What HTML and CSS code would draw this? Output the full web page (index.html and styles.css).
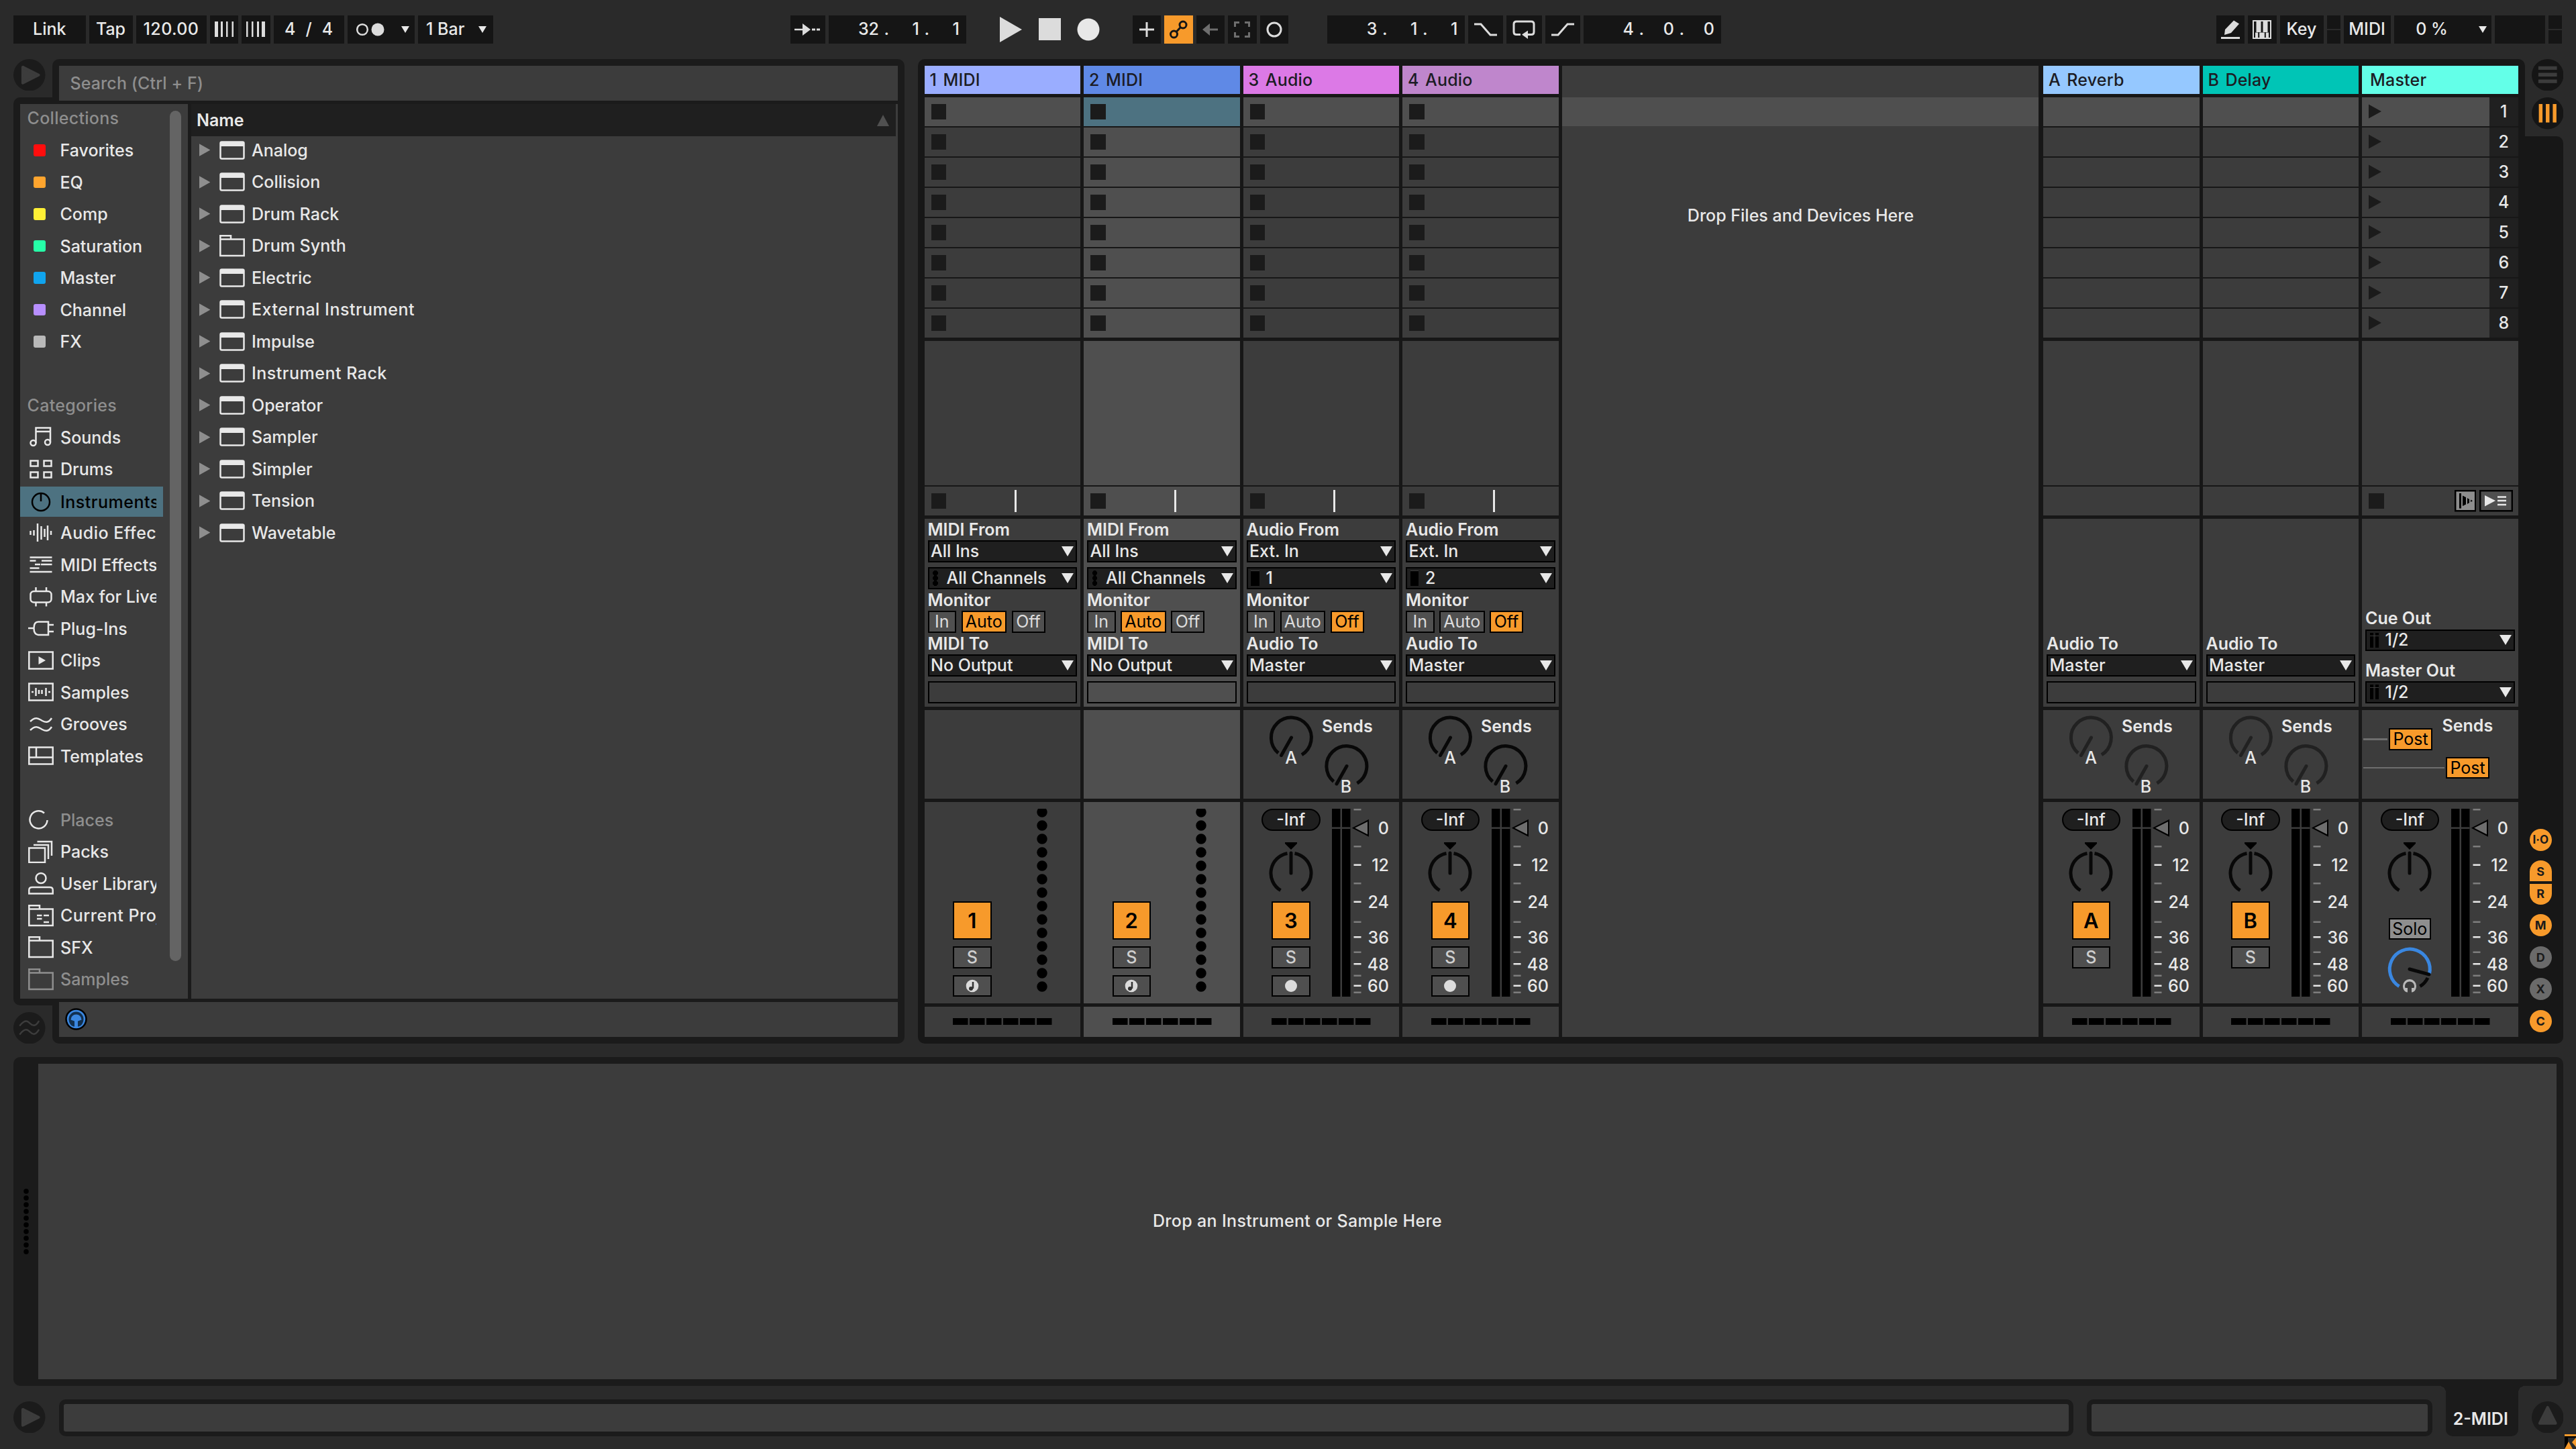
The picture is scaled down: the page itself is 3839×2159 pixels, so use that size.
FILE: index.html
```
<!DOCTYPE html>
<html lang="en">
<head>
    <meta charset="UTF-8">
    <title>Live Set</title>
    <link rel="stylesheet" href="styles.css">
</head>
<body>
<!-- shared icons -->
<svg class="defs" width="0" height="0">
    <symbol id="tri-right" viewBox="0 0 17 19"><path d="M0 0L17 9.5L0 19Z" fill="currentColor"/></symbol>
    <symbol id="tri-down" viewBox="0 0 18 15"><path d="M0 0H18L9 15Z" fill="currentColor"/></symbol>
    <symbol id="device" viewBox="0 0 38 34"><rect x="1.5" y="4.5" width="35" height="25" rx="2" fill="none" stroke="currentColor" stroke-width="2.5"/><path d="M1 4h36v7H1z" fill="currentColor"/></symbol>
    <symbol id="folder" viewBox="0 0 38 34"><path d="M1.3 32V2.3H17V7.5H36.7V32ZM1.3 7.5H17" fill="none" stroke="currentColor" stroke-width="2.5"/></symbol>
    <symbol id="k-send" viewBox="-35 -35 70 70"><g fill="none" stroke="currentColor" stroke-width="5"><path d="M-19.5 23A30 30 0 1 1 15.5 25.7"/><path d="M0 0L-15 26.5" stroke-linecap="round"/></g></symbol>
    <symbol id="k-pan" viewBox="-35 -46 70 75"><path d="M-9 -46H9V-44L0 -35L-9 -44Z"/><g fill="none" stroke="#080808" stroke-width="5"><path d="M-15.5 25.7A30 30 0 0 1 -5.5 -29.5M5.5 -29.5A30 30 0 0 1 15.5 25.7"/><path d="M0 0V-30" stroke-linecap="round"/></g></symbol>
    <symbol id="meter" viewBox="0 0 90 280">
        <path d="M0 0H12.5V280H0ZM15 0H27.5V280H15Z"/>
        <path d="M0 28.7H27.5" stroke="#3c3c3c" stroke-width="2.5"/>
        <path d="M32.5 1.3h11M32.5 56.3h11M32.5 111.3h11M32.5 168.7h11M32.5 213.7h11M32.5 248.7h11M32.5 273.7h11" stroke="#7d7d7d" stroke-width="2.5"/>
        <path d="M32.5 83.7h11M32.5 138.7h11M32.5 191.3h11M32.5 231.3h11M32.5 263.7h11" stroke="#e8e8e8" stroke-width="2.5"/>
        <path d="M32 28.7L54 17.5V40Z" fill="#6e6e6e" stroke="#000" stroke-width="2"/>
    </symbol>
    <symbol id="leds" viewBox="0 0 16 280"><path d="M8 5V266" stroke="#000" stroke-width="15.5" stroke-linecap="round" stroke-dasharray="0 20"/></symbol>
    <symbol id="xfade" viewBox="0 0 148 10"><path d="M0 5H148" stroke="#000" stroke-width="10" stroke-dasharray="22.5 2.5"/></symbol>
    <symbol id="waves" viewBox="0 0 38 34"><path d="M3 13C12 4 17 10 21 12S30 16 35 8M3 26C12 17 17 23 21 25S30 29 35 21" fill="none" stroke="currentColor" stroke-width="2.5"/></symbol>
    <symbol id="midi-arm" viewBox="-10 -10 20 20"><circle r="9.3" fill="#dcdcdc"/><path d="M1 -6V4" stroke="#333" stroke-width="2.5"/><circle cx="-2" cy="4" r="3" fill="#333"/></symbol>
    <symbol id="phones" viewBox="-12 -12 24 24"><path d="M-3 9.5C-8 9.5 -10 4 -10 0A10 10 0 0 1 10 0C10 4 8 9.5 3 9.5V3L6.5 3A7 7 0 1 0 -6.5 3L-3 3Z" fill="currentColor"/></symbol>
</svg>

<div class="app">
    <!-- control bar -->
    <div class="topbar">
        <div class="box w-link">Link</div>
        <div class="box w-tap">Tap</div>
        <div class="box w-tempo">120.00</div>
        <div class="box w-nudge"><svg width="28" height="23"><path d="M0 0h5v23H0zM9 0h3v23H9zM17 0h2.5v23H17zM25.5 0H28v23h-2.5z" fill="#dcdcdc"/></svg></div>
        <div class="box w-nudge"><svg width="28" height="23"><path d="M23 0h5v23h-5zM16 0h3v23h-3zM8 0h2.5v23H8zM0 0h2.5v23H0z" fill="#dcdcdc"/></svg></div>
        <div class="box w-sig"><span>4</span><span>/</span><span>4</span></div>
        <div class="box w-metro"><svg width="42" height="20"><circle cx="9" cy="10" r="7.8" fill="none" stroke="#dcdcdc" stroke-width="2.5"/><circle cx="32" cy="10" r="9.5" fill="#dcdcdc"/></svg><svg class="mini-arrow"><use href="#tri-down"/></svg></div>
        <div class="box w-bar">1 Bar<svg class="mini-arrow"><use href="#tri-down"/></svg></div>

        <div class="box w-follow"><svg width="40" height="20"><path d="M0 8.7h12V1l12 9l-12 9v-7.7H0z" fill="#dcdcdc"/><path d="M26 10h5M33 10h5" stroke="#dcdcdc" stroke-width="3"/></svg></div>
        <div class="box w-pos"><span>32</span><i>.</i><span>1</span><i>.</i><span>1</span></div>
        <div class="transport">
            <svg width="33" height="38"><path d="M0 0L33 19L0 38Z" fill="#dcdcdc"/></svg>
            <svg width="33" height="33"><path d="M0 0H33V33H0Z" fill="#dcdcdc"/></svg>
            <svg width="34" height="34"><circle cx="17" cy="17" r="16.5" fill="#e8e8e8"/></svg>
        </div>
        <div class="box w-sq"><svg width="24" height="24"><path d="M12 1V23M1 12H23" stroke="#dcdcdc" stroke-width="3"/></svg></div>
        <div class="box w-sq on"><svg width="28" height="28"><g fill="none" stroke="#151515" stroke-width="3"><circle cx="7.5" cy="21" r="5"/><circle cx="21" cy="7" r="5"/><path d="M11 17.5L17.5 10.5"/></g></svg></div>
        <div class="box w-sq"><svg width="24" height="20"><path d="M0 10L11 1V8.5H23V11.5H11V19Z" fill="#6e6e6e"/></svg></div>
        <div class="box w-sq"><svg width="24" height="24"><path d="M1.5 8V1.5H8M16 1.5H22.5V8M22.5 16V22.5H16M8 22.5H1.5V16" fill="none" stroke="#6e6e6e" stroke-width="3"/></svg></div>
        <div class="box w-sq"><svg width="24" height="24"><circle cx="12" cy="12" r="10" fill="none" stroke="#dcdcdc" stroke-width="3"/></svg></div>

        <div class="box w-pos loop-start"><span>3</span><i>.</i><span>1</span><i>.</i><span>1</span></div>
        <div class="box w-punch"><svg width="34" height="20"><path d="M0 2H10L24 18H34" fill="none" stroke="#dcdcdc" stroke-width="3"/></svg></div>
        <div class="box w-punch"><svg width="34" height="28"><path d="M12 21.5H6Q2 21.5 2 17.5V6Q2 2 6 2H28Q32 2 32 6V17.5Q32 21.5 28 21.5H22" fill="none" stroke="#dcdcdc" stroke-width="3"/><path d="M14 21.5L23 15.5V28Z" fill="#dcdcdc"/></svg></div>
        <div class="box w-punch"><svg width="34" height="20"><path d="M0 18H10L24 2H34" fill="none" stroke="#dcdcdc" stroke-width="3"/></svg></div>
        <div class="box w-pos"><span>4</span><i>.</i><span>0</span><i>.</i><span>0</span></div>

        <div class="box w-sq draw"><svg width="28" height="28"><path d="M5 22L6 14L19 0.5L27 5.5L15 19Z" fill="#dcdcdc"/><path d="M0 26.5H28" stroke="#dcdcdc" stroke-width="3"/></svg></div>
        <div class="box w-sq"><svg width="28" height="28"><path d="M1 1H27V27H1Z" fill="none" stroke="#dcdcdc" stroke-width="2"/><path d="M5.5 0H12.5V18H5.5ZM15.5 0H22.5V18H15.5Z" fill="#dcdcdc"/><path d="M2 2H4V26H2ZM13 2H15V18H13ZM24 2H26V26H24Z" fill="#151515"/><path d="M4 18.5H8.2V26H4ZM10.2 18.5H17.8V26H10.2ZM19.8 18.5H24V26H19.8Z" fill="#dcdcdc"/></svg></div>
        <div class="box w-key">Key</div>
        <div class="leds"><i></i><i></i></div>
        <div class="box w-midi">MIDI</div>
        <div class="box w-cpu"><span>0 %</span><svg class="mini-arrow"><use href="#tri-down"/></svg></div>
        <div class="box w-disk"></div>
        <div class="leds"><i></i><i></i></div>
    </div>

    <div class="middle">
        <!-- browser -->
        <div class="browser">
            <div class="browser-top">
                <svg class="round" viewBox="0 0 48 48"><circle cx="24" cy="24" r="24" fill="#1b1b1b"/><path d="M14 12L38 24L14 36Z" fill="#3c3c3c" stroke="#3c3c3c" stroke-width="4" stroke-linejoin="round"/></svg>
                <div class="search-wrap"><div class="search">Search (Ctrl + F)</div></div>
            </div>
            <div class="browser-body">
                <div class="sidebar">
                    <div class="rows">
                        <div class="row title">Collections</div>
                        <div class="row"><b class="tag red"></b><span>Favorites</span></div>
                        <div class="row"><b class="tag orange"></b><span>EQ</span></div>
                        <div class="row"><b class="tag yellow"></b><span>Comp</span></div>
                        <div class="row"><b class="tag green"></b><span>Saturation</span></div>
                        <div class="row"><b class="tag blue"></b><span>Master</span></div>
                        <div class="row"><b class="tag purple"></b><span>Channel</span></div>
                        <div class="row"><b class="tag grey"></b><span>FX</span></div>
                        <div class="row"></div>
                        <div class="row title">Categories</div>
                        <div class="row"><svg class="ico" viewBox="0 0 38 34"><path d="M11.5 26V3.5H33V25M11.5 9H33"/><circle cx="7.5" cy="26" r="4"/><circle cx="29" cy="25" r="4"/></svg><span>Sounds</span></div>
                        <div class="row"><svg class="ico" viewBox="0 0 38 34"><path d="M3.5 4.5h11v8h-11zM23.5 4.5h11v8h-11zM3.5 21.5h11v8h-11zM23.5 21.5h11v8h-11z"/></svg><span>Drums</span></div>
                        <div class="row active"><svg class="ico" viewBox="0 0 38 34"><circle cx="19" cy="17" r="13"/><path d="M19 4V16"/></svg><span class="wide">Instruments</span></div>
                        <div class="row"><svg class="ico" viewBox="0 0 38 34"><path d="M3.5 14v6M8.5 13v8M14 3v27M19.5 7v20M24.5 11v12M29 6v22M34 14v6"/></svg><span class="wide">Audio Effects</span></div>
                        <div class="row"><svg class="ico" viewBox="0 0 38 34"><path d="M2.5 6.5h33M2.5 11.5h9M20 11.5h15.5M10 17h8M19 17h16.5M2.5 22.5h14M2.5 28h33"/></svg><span>MIDI Effects</span></div>
                        <div class="row"><svg class="ico" viewBox="0 0 38 34"><rect x="3.5" y="9" width="31" height="16.5" rx="5"/><path d="M11.5 3v6M27 3v6M11.5 25.5v6M27 25.5v6"/></svg><span>Max for Live</span></div>
                        <div class="row"><svg class="ico" viewBox="0 0 38 34"><path d="M0 17H8M30 7.5H15Q8.5 7.5 8.5 17T15 27H30ZM30 12H38M30 22H38"/></svg><span>Plug-Ins</span></div>
                        <div class="row"><svg class="ico" viewBox="0 0 38 34"><path d="M1.3 4.5h35.4v25H1.3z"/><path d="M15.5 11L26 17L15.5 23Z" fill="#e8e8e8" stroke="none"/></svg><span>Clips</span></div>
                        <div class="row"><svg class="ico" viewBox="0 0 38 34"><path d="M1.3 4.5h35.4v25H1.3zM5 17h3M11.5 11v12M16 14v6M20.5 14v6M26.5 11v12M30 17h3"/></svg><span>Samples</span></div>
                        <div class="row"><svg class="ico"><use href="#waves"/></svg><span>Grooves</span></div>
                        <div class="row"><svg class="ico" viewBox="0 0 38 34"><path d="M1.3 4.5h35.4v25H1.3zM1.3 19.5h35.4M12 4.5v15"/></svg><span>Templates</span></div>
                        <div class="row"></div>
                        <div class="row dim"><svg class="ico lit" viewBox="0 0 38 34"><path d="M24 7.5A13 13 0 1 0 28.5 18"/></svg><span>Places</span></div>
                        <div class="row"><svg class="ico" viewBox="0 0 38 34"><path d="M1.3 11.5H25V33H1.3zM8 7H30V28M13.5 2H35V23"/></svg><span>Packs</span></div>
                        <div class="row"><svg class="ico" viewBox="0 0 38 34"><circle cx="19" cy="9.5" r="7.5"/><path d="M1.3 32.5V27Q1.3 23 6 23H32Q36.7 23 36.7 27V32.5Z"/></svg><span>User Library</span></div>
                        <div class="row"><svg class="ico" viewBox="0 0 38 34"><path d="M1.3 32V2.3H17V7.5H36.7V32ZM1.3 7.5H17M13 17h7.5M13 22h7.5M23 17h8M23 27h8"/></svg><span class="wide">Current Project</span></div>
                        <div class="row"><svg class="ico"><use href="#folder"/></svg><span>SFX</span></div>
                        <div class="row dim"><svg class="ico"><use href="#folder"/></svg><span>Samples</span></div>
                    </div>
                    <div class="scrollbar"></div>
                </div>
                <div class="content">
                    <div class="content-head">Name<svg width="18" height="17"><path d="M9 0L18 17H0Z" fill="#505050"/></svg></div>
                    <div class="list">
                        <div class="item"><svg class="fold"><use href="#tri-right"/></svg><svg class="ico"><use href="#device"/></svg><span>Analog</span></div>
                        <div class="item"><svg class="fold"><use href="#tri-right"/></svg><svg class="ico"><use href="#device"/></svg><span>Collision</span></div>
                        <div class="item"><svg class="fold"><use href="#tri-right"/></svg><svg class="ico"><use href="#device"/></svg><span>Drum Rack</span></div>
                        <div class="item"><svg class="fold"><use href="#tri-right"/></svg><svg class="ico"><use href="#folder"/></svg><span>Drum Synth</span></div>
                        <div class="item"><svg class="fold"><use href="#tri-right"/></svg><svg class="ico"><use href="#device"/></svg><span>Electric</span></div>
                        <div class="item"><svg class="fold"><use href="#tri-right"/></svg><svg class="ico"><use href="#device"/></svg><span class="wide">External Instrument</span></div>
                        <div class="item"><svg class="fold"><use href="#tri-right"/></svg><svg class="ico"><use href="#device"/></svg><span>Impulse</span></div>
                        <div class="item"><svg class="fold"><use href="#tri-right"/></svg><svg class="ico"><use href="#device"/></svg><span class="wide">Instrument Rack</span></div>
                        <div class="item"><svg class="fold"><use href="#tri-right"/></svg><svg class="ico"><use href="#device"/></svg><span>Operator</span></div>
                        <div class="item"><svg class="fold"><use href="#tri-right"/></svg><svg class="ico"><use href="#device"/></svg><span>Sampler</span></div>
                        <div class="item"><svg class="fold"><use href="#tri-right"/></svg><svg class="ico"><use href="#device"/></svg><span>Simpler</span></div>
                        <div class="item"><svg class="fold"><use href="#tri-right"/></svg><svg class="ico"><use href="#device"/></svg><span>Tension</span></div>
                        <div class="item"><svg class="fold"><use href="#tri-right"/></svg><svg class="ico"><use href="#device"/></svg><span>Wavetable</span></div>
                    </div>
                </div>
            </div>
            <div class="browser-bottom">
                <svg class="round" viewBox="0 0 48 48"><circle cx="24" cy="24" r="24" fill="#1b1b1b"/><path d="M10 20C18 10 22 14 25 17S33 23 38 14M10 33C18 23 22 27 25 30S33 36 38 27" fill="none" stroke="#3c3c3c" stroke-width="2.5" stroke-linecap="round"/></svg>
                <div class="preview-wrap"><div class="preview"><svg width="33" height="33" viewBox="-16.5 -16.5 33 33"><circle r="15" fill="#3a87e0" stroke="#000" stroke-width="2.5"/><path d="M-2.5 11C-8 11 -11 5 -11 0A11 11 0 0 1 11 0C11 5 8 11 2.5 11V3L8 1A8 8 0 1 0 -8 1L-2.5 3Z" fill="#12304f"/></svg></div></div>
            </div>
        </div>

        <!-- session view -->
        <div class="session">
            <div class="tracks">
                <div class="track">
                    <div class="name c1">1 MIDI</div>
                    <div class="slots"><div class="slot scene"><b></b></div><div class="slot"><b></b></div><div class="slot"><b></b></div><div class="slot"><b></b></div><div class="slot"><b></b></div><div class="slot"><b></b></div><div class="slot"><b></b></div><div class="slot"><b></b></div></div>
                    <div class="lower"><div class="blank"></div><div class="status"><b></b><i></i></div></div>
                    <div class="io">
                        <label>MIDI From</label>
                        <div class="select">All Ins<svg><use href="#tri-down"/></svg></div>
                        <div class="select second"><em class="dots"></em>All Channels<svg><use href="#tri-down"/></svg></div>
                        <label>Monitor</label>
                        <div class="monitor"><span>In</span><span class="on">Auto</span><span>Off</span></div>
                        <label>MIDI To</label>
                        <div class="select">No Output<svg><use href="#tri-down"/></svg></div>
                        <div class="empty"></div>
                    </div>
                    <div class="sends"></div>
                    <div class="mixer">
                        <div class="ctl midi"><div class="activator">1</div><div class="solo">S</div><div class="solo"><svg width="20" height="20"><use href="#midi-arm"/></svg></div></div>
                        <svg class="led-col"><use href="#leds"/></svg>
                    </div>
                    <div class="cross"><svg width="148" height="10"><use href="#xfade"/></svg></div>
                </div>

                <div class="track selected">
                    <div class="name c2">2 MIDI</div>
                    <div class="slots"><div class="slot picked"><b></b></div><div class="slot"><b></b></div><div class="slot"><b></b></div><div class="slot"><b></b></div><div class="slot"><b></b></div><div class="slot"><b></b></div><div class="slot"><b></b></div><div class="slot"><b></b></div></div>
                    <div class="lower"><div class="blank"></div><div class="status"><b></b><i></i></div></div>
                    <div class="io">
                        <label>MIDI From</label>
                        <div class="select">All Ins<svg><use href="#tri-down"/></svg></div>
                        <div class="select second"><em class="dots"></em>All Channels<svg><use href="#tri-down"/></svg></div>
                        <label>Monitor</label>
                        <div class="monitor"><span>In</span><span class="on">Auto</span><span>Off</span></div>
                        <label>MIDI To</label>
                        <div class="select">No Output<svg><use href="#tri-down"/></svg></div>
                        <div class="empty"></div>
                    </div>
                    <div class="sends"></div>
                    <div class="mixer">
                        <div class="ctl midi"><div class="activator">2</div><div class="solo">S</div><div class="solo"><svg width="20" height="20"><use href="#midi-arm"/></svg></div></div>
                        <svg class="led-col"><use href="#leds"/></svg>
                    </div>
                    <div class="cross"><svg width="148" height="10"><use href="#xfade"/></svg></div>
                </div>

                <div class="track">
                    <div class="name c3">3 Audio</div>
                    <div class="slots"><div class="slot scene"><b></b></div><div class="slot"><b></b></div><div class="slot"><b></b></div><div class="slot"><b></b></div><div class="slot"><b></b></div><div class="slot"><b></b></div><div class="slot"><b></b></div><div class="slot"><b></b></div></div>
                    <div class="lower"><div class="blank"></div><div class="status"><b></b><i></i></div></div>
                    <div class="io">
                        <label>Audio From</label>
                        <div class="select">Ext. In<svg><use href="#tri-down"/></svg></div>
                        <div class="select second"><em class="mono"></em>1<svg><use href="#tri-down"/></svg></div>
                        <label>Monitor</label>
                        <div class="monitor"><span>In</span><span>Auto</span><span class="on">Off</span></div>
                        <label>Audio To</label>
                        <div class="select">Master<svg><use href="#tri-down"/></svg></div>
                        <div class="empty"></div>
                    </div>
                    <svg class="sends" viewBox="0 0 232.5 132.5"><use href="#k-send" x="36.5" y="6" width="70" height="70"/><use href="#k-send" x="119" y="48.5" width="70" height="70"/><text x="71" y="80" class="mid">A</text><text x="153" y="122.5" class="mid">B</text><text x="117" y="32.5" class="bold">Sends</text></svg>
                    <div class="mixer">
                        <div class="ctl"><div class="vol">-Inf</div><svg class="pan"><use href="#k-pan"/></svg><div class="activator">3</div><div class="solo">S</div><div class="solo"><b class="arm"></b></div></div>
                        <svg class="meter" viewBox="0 0 90 280"><use href="#meter"/><text x="85" y="38">0</text><text x="85" y="93">12</text><text x="85" y="148">24</text><text x="85" y="200.5">36</text><text x="85" y="240.5">48</text><text x="85" y="273">60</text></svg>
                    </div>
                    <div class="cross"><svg width="148" height="10"><use href="#xfade"/></svg></div>
                </div>

                <div class="track">
                    <div class="name c4">4 Audio</div>
                    <div class="slots"><div class="slot scene"><b></b></div><div class="slot"><b></b></div><div class="slot"><b></b></div><div class="slot"><b></b></div><div class="slot"><b></b></div><div class="slot"><b></b></div><div class="slot"><b></b></div><div class="slot"><b></b></div></div>
                    <div class="lower"><div class="blank"></div><div class="status"><b></b><i></i></div></div>
                    <div class="io">
                        <label>Audio From</label>
                        <div class="select">Ext. In<svg><use href="#tri-down"/></svg></div>
                        <div class="select second"><em class="mono"></em>2<svg><use href="#tri-down"/></svg></div>
                        <label>Monitor</label>
                        <div class="monitor"><span>In</span><span>Auto</span><span class="on">Off</span></div>
                        <label>Audio To</label>
                        <div class="select">Master<svg><use href="#tri-down"/></svg></div>
                        <div class="empty"></div>
                    </div>
                    <svg class="sends" viewBox="0 0 232.5 132.5"><use href="#k-send" x="36.5" y="6" width="70" height="70"/><use href="#k-send" x="119" y="48.5" width="70" height="70"/><text x="71" y="80" class="mid">A</text><text x="153" y="122.5" class="mid">B</text><text x="117" y="32.5" class="bold">Sends</text></svg>
                    <div class="mixer">
                        <div class="ctl"><div class="vol">-Inf</div><svg class="pan"><use href="#k-pan"/></svg><div class="activator">4</div><div class="solo">S</div><div class="solo"><b class="arm"></b></div></div>
                        <svg class="meter" viewBox="0 0 90 280"><use href="#meter"/><text x="85" y="38">0</text><text x="85" y="93">12</text><text x="85" y="148">24</text><text x="85" y="200.5">36</text><text x="85" y="240.5">48</text><text x="85" y="273">60</text></svg>
                    </div>
                    <div class="cross"><svg width="148" height="10"><use href="#xfade"/></svg></div>
                </div>

                <div class="drop-area"><div class="drop-scene"></div><p>Drop Files and Devices Here</p></div>

                <div class="track return">
                    <div class="name c5">A Reverb</div>
                    <div class="slots"><div class="slot scene"></div><div class="slot"></div><div class="slot"></div><div class="slot"></div><div class="slot"></div><div class="slot"></div><div class="slot"></div><div class="slot"></div></div>
                    <div class="lower"><div class="blank"></div><div class="status"></div></div>
                    <div class="io">
                        <label>Audio To</label>
                        <div class="select">Master<svg><use href="#tri-down"/></svg></div>
                        <div class="empty"></div>
                    </div>
                    <svg class="sends" viewBox="0 0 232.5 132.5"><use href="#k-send" x="36.5" y="6" width="70" height="70"/><use href="#k-send" x="119" y="48.5" width="70" height="70"/><text x="71" y="80" class="mid">A</text><text x="153" y="122.5" class="mid">B</text><text x="117" y="32.5" class="bold">Sends</text></svg>
                    <div class="mixer">
                        <div class="ctl"><div class="vol">-Inf</div><svg class="pan"><use href="#k-pan"/></svg><div class="activator">A</div><div class="solo">S</div></div>
                        <svg class="meter" viewBox="0 0 90 280"><use href="#meter"/><text x="85" y="38">0</text><text x="85" y="93">12</text><text x="85" y="148">24</text><text x="85" y="200.5">36</text><text x="85" y="240.5">48</text><text x="85" y="273">60</text></svg>
                    </div>
                    <div class="cross"><svg width="148" height="10"><use href="#xfade"/></svg></div>
                </div>

                <div class="track return">
                    <div class="name c6">B Delay</div>
                    <div class="slots"><div class="slot scene"></div><div class="slot"></div><div class="slot"></div><div class="slot"></div><div class="slot"></div><div class="slot"></div><div class="slot"></div><div class="slot"></div></div>
                    <div class="lower"><div class="blank"></div><div class="status"></div></div>
                    <div class="io">
                        <label>Audio To</label>
                        <div class="select">Master<svg><use href="#tri-down"/></svg></div>
                        <div class="empty"></div>
                    </div>
                    <svg class="sends" viewBox="0 0 232.5 132.5"><use href="#k-send" x="36.5" y="6" width="70" height="70"/><use href="#k-send" x="119" y="48.5" width="70" height="70"/><text x="71" y="80" class="mid">A</text><text x="153" y="122.5" class="mid">B</text><text x="117" y="32.5" class="bold">Sends</text></svg>
                    <div class="mixer">
                        <div class="ctl"><div class="vol">-Inf</div><svg class="pan"><use href="#k-pan"/></svg><div class="activator">B</div><div class="solo">S</div></div>
                        <svg class="meter" viewBox="0 0 90 280"><use href="#meter"/><text x="85" y="38">0</text><text x="85" y="93">12</text><text x="85" y="148">24</text><text x="85" y="200.5">36</text><text x="85" y="240.5">48</text><text x="85" y="273">60</text></svg>
                    </div>
                    <div class="cross"><svg width="148" height="10"><use href="#xfade"/></svg></div>
                </div>

                <div class="track master">
                    <div class="name c7">Master</div>
                    <div class="slots">
                        <div class="slot scene"><svg><use href="#tri-right"/></svg><u>1</u></div>
                        <div class="slot"><svg><use href="#tri-right"/></svg><u>2</u></div>
                        <div class="slot"><svg><use href="#tri-right"/></svg><u>3</u></div>
                        <div class="slot"><svg><use href="#tri-right"/></svg><u>4</u></div>
                        <div class="slot"><svg><use href="#tri-right"/></svg><u>5</u></div>
                        <div class="slot"><svg><use href="#tri-right"/></svg><u>6</u></div>
                        <div class="slot"><svg><use href="#tri-right"/></svg><u>7</u></div>
                        <div class="slot"><svg><use href="#tri-right"/></svg><u>8</u></div>
                    </div>
                    <div class="lower"><div class="blank"></div><div class="status"><b></b>
                        <svg class="btn-a" viewBox="0 0 32.5 32.5"><rect x="1.2" y="1.2" width="30" height="30" fill="#8e8e8e" stroke="#000" stroke-width="2.5"/><path d="M7 5h3v22.5H7zM12 8.5L17 11V21.5L12 24zM19 12l3 2v5l-3 2zM24 14.5l3 1.7L24 18z"/></svg>
                        <svg class="btn-b" viewBox="0 0 50 32.5"><rect x="1.2" y="1.2" width="47.6" height="30" fill="#505050" stroke="#000" stroke-width="2.5"/><path d="M8 8L24 16L8 24.5Z" fill="#e8e8e8"/><path d="M27 10.5H40M27 16H40M27 22H40" stroke="#e8e8e8" stroke-width="2.5"/></svg>
                    </div></div>
                    <div class="io">
                        <label>Cue Out</label>
                        <div class="select cue"><em class="stereo"></em>1/2<svg><use href="#tri-down"/></svg></div>
                        <label>Master Out</label>
                        <div class="select"><em class="stereo"></em>1/2<svg><use href="#tri-down"/></svg></div>
                    </div>
                    <div class="sends post">
                        <h6>Sends</h6>
                        <div><hr class="short"><span>Post</span></div>
                        <div><hr class="long"><span>Post</span></div>
                    </div>
                    <div class="mixer">
                        <div class="ctl"><div class="vol">-Inf</div><svg class="pan"><use href="#k-pan"/></svg><div class="cue-solo">Solo</div>
                            <svg class="cue-knob" viewBox="-35 -35 70 75"><path d="M-15.5 25.7A30 30 0 1 1 29.5 7" fill="none" stroke="#3a87e0" stroke-width="5"/><path d="M27 13A30 30 0 0 1 15.5 25.7" fill="none" stroke="#080808" stroke-width="5"/><path d="M0 0L29 7.8" stroke="#080808" stroke-width="5" stroke-linecap="round"/><use href="#phones" x="-12" y="13" width="24" height="24"/></svg>
                        </div>
                        <svg class="meter" viewBox="0 0 90 280"><use href="#meter"/><text x="85" y="38">0</text><text x="85" y="93">12</text><text x="85" y="148">24</text><text x="85" y="200.5">36</text><text x="85" y="240.5">48</text><text x="85" y="273">60</text></svg>
                    </div>
                    <div class="cross"><svg width="148" height="10"><use href="#xfade"/></svg></div>
                </div>
            </div>
            <div class="side">
                <svg class="round" viewBox="0 0 48 48"><circle cx="24" cy="24" r="24" fill="#151515"/><path d="M10 13.5H38M10 23.5H38M10 33.5H38" stroke="#3c3c3c" stroke-width="5.5"/></svg>
                <svg class="round" viewBox="0 0 48 48"><circle cx="24" cy="24" r="24" fill="#151515"/><path d="M13.5 10V38M24 10V38M34.5 10V38" stroke="#f79a2b" stroke-width="5.5"/></svg>
                <div class="rail">
                    <span class="pill io-pill">I·O</span>
                    <span class="pill top">S</span>
                    <span class="pill bottom">R</span>
                    <span class="pill">M</span>
                    <span class="pill off">D</span>
                    <span class="pill off">X</span>
                    <span class="pill">C</span>
                </div>
            </div>
        </div>
    </div>

    <!-- device view -->
    <div class="detail">
        <div class="grip"><svg width="8" height="98"><path d="M4 4V95" stroke="#000" stroke-width="7.5" stroke-linecap="round" stroke-dasharray="0 10"/></svg></div>
        <div class="detail-body">Drop an Instrument or Sample Here</div>
    </div>

    <!-- status bar -->
    <div class="footer">
        <svg class="round" viewBox="0 0 48 48"><circle cx="24" cy="24" r="24" fill="#1b1b1b"/><path d="M14 12L38 24L14 36Z" fill="#3c3c3c" stroke="#3c3c3c" stroke-width="4" stroke-linejoin="round"/></svg>
        <div class="info"></div>
        <div class="overview"></div>
        <div class="tab">2-MIDI</div>
        <svg class="round last" viewBox="0 0 48 48"><circle cx="24" cy="24" r="24" fill="#1b1b1b"/><path d="M24 9L36 33H12Z" fill="#3c3c3c" stroke="#3c3c3c" stroke-width="4" stroke-linejoin="round"/></svg>
        <svg class="corner" viewBox="0 0 17 22"><path d="M0 0H17V3H0Z" fill="#f79a2b"/><path d="M0 3H17V5H5V22H0Z" fill="#000"/><path d="M17 5L11 12L17 19Z" fill="#f79a2b"/><path d="M0 22L6 11L12 22Z" fill="#f79a2b"/></svg>
    </div>
</div>
</body>
</html>
```
FILE: styles.css
```
* {
    box-sizing: border-box;
}
body {
    margin: 0;
    background: #2a2a2a;
    color: #e8e8e8;
    font-family: Inter, "Liberation Sans", sans-serif;
    font-size: 25px;
    font-weight: 500;
    line-height: 1;
    white-space: nowrap;
}
svg {
    display: block;
    flex: none;
}
.defs {
    position: absolute;
}
.app {
    width: 3839px;
    height: 2159px;
    overflow: hidden;
    display: flex;
    flex-direction: column;
}
.round {
    width: 47.5px;
    height: 47.5px;
}

/* control bar */
.topbar {
    display: flex;
    gap: 5px;
    height: 87.5px;
    padding: 22.5px 21.5px 0 20px;
    flex: none;
}
.box {
    display: flex;
    align-items: center;
    justify-content: center;
    flex: none;
    height: 42.5px;
    background: #151515;
}
.mini-arrow {
    width: 12px;
    height: 10px;
}
.w-link { width: 107.5px; }
.w-tap { width: 65px; }
.w-tempo {
    width: 105px;
    letter-spacing: 0.4px;
}
.w-nudge { width: 42.5px; }
.w-sig {
    width: 105px;
    gap: 15px;
}
.w-metro {
    width: 100px;
    gap: 25px;
    padding-left: 5px;
}
.w-bar {
    width: 112.5px;
    gap: 21px;
    padding-left: 3px;
}
.w-follow {
    width: 52.5px;
    margin-left: 437.5px;
}
.w-pos {
    width: 205px;
    justify-content: flex-end;
    padding-right: 10px;
}
.w-pos span {
    width: 45px;
    text-align: right;
}
.w-pos i {
    width: 15px;
    text-align: right;
    font-style: normal;
}
.transport {
    display: flex;
    align-items: center;
    gap: 24.5px;
    height: 42.5px;
    margin-left: 45px;
    margin-right: 43.5px;
}
.w-sq { width: 42.5px; }
.w-sq.on { background: #f79a2b; }
.loop-start { margin-left: 52.5px; }
.w-punch { width: 52.5px; }
.draw { margin-left: auto; }
.w-key { width: 65px; }
.leds {
    display: flex;
    flex-direction: column;
    gap: 2.5px;
    width: 20px;
    height: 42.5px;
}
.leds i {
    flex: 1;
    background: #151515;
}
.w-midi { width: 70px; }
.w-cpu {
    width: 145px;
    gap: 46px;
    padding-left: 26px;
}
.w-disk { width: 75px; }

.middle {
    display: flex;
    gap: 20px;
    height: 1467.5px;
    padding-left: 20px;
    flex: none;
}

/* browser */
.browser {
    width: 1327.5px;
    flex: none;
}
.browser-top,
.browser-bottom {
    display: flex;
    gap: 10px;
    height: 57.5px;
}
.search-wrap {
    position: relative;
    z-index: 1;
    flex: 1;
    padding: 10px 10px 0;
    height: 62.5px;
    background: #1b1b1b;
    border-radius: 10px 10px 0 0;
}
.search {
    height: 52.5px;
    padding: 14px 17px;
    background: #3c3c3c;
    color: #8e8e8e;
    letter-spacing: 0.1px;
}
.browser-body {
    display: flex;
    gap: 5px;
    height: 1352.5px;
    padding: 10px;
    background: #1b1b1b;
    border-radius: 10px 0 0 10px;
}
.sidebar {
    display: flex;
    justify-content: space-between;
    width: 250px;
    padding-right: 10px;
    background: #3c3c3c;
}
.rows {
    width: 213px;
    margin-top: -2.5px;
}
.row {
    display: flex;
    align-items: center;
    height: 47.5px;
    padding: 0 10px 0 12px;
}
.row span {
    flex: 1;
    overflow: hidden;
    margin-left: 10px;
    padding-top: 1px;
    line-height: 36px;
}
.row.title {
    padding: 1px 0 0 10.5px;
    color: #8e8e8e;
    letter-spacing: 0.3px;
}
.row.dim { color: #8e8e8e; }
.row.active {
    height: 45px;
    margin-top: 2.5px;
    background: #4d7281;
    color: #000;
}
.wide { letter-spacing: 0.5px; }
.ico {
    width: 38px;
    height: 34px;
    fill: none;
    stroke: currentColor;
    stroke-width: 2.5px;
}
.ico use {
    stroke: none;
}
.ico.lit { stroke: #e8e8e8; }
.tag {
    width: 17.5px;
    height: 17.5px;
    margin: 0 12px 0 8px;
    border-radius: 3px;
}
.red { background: #ff0d0d; }
.orange { background: #ffa52e; }
.yellow { background: #fff035; }
.green { background: #26ffa8; }
.blue { background: #10a4ee; }
.purple { background: #b88fff; }
.grey { background: #b9b9b9; }
.scrollbar {
    width: 17.5px;
    height: 1267px;
    margin-top: 10px;
    border-radius: 9px;
    background: #646464;
}
.content {
    flex: 1;
    background: #3c3c3c;
}
.content-head {
    display: flex;
    align-items: center;
    justify-content: space-between;
    height: 47.5px;
    margin-right: 2.5px;
    padding: 2px 10px 0 8px;
    background: #1f1f1f;
    font-weight: 600;
}
.list {
    margin-top: -2.5px;
}
.item {
    display: flex;
    align-items: center;
    height: 47.5px;
    padding-left: 11.5px;
}
.item span {
    margin-left: 10px;
    padding-top: 1px;
}
.fold {
    width: 16.5px;
    height: 19px;
    margin-right: 14px;
    color: #8e8e8e;
}
.browser-bottom .round { margin-top: 10px; }
.preview-wrap {
    position: relative;
    flex: 1;
    height: 62.5px;
    margin-top: -5px;
    padding: 0 10px 10px;
    background: #1b1b1b;
    border-radius: 0 0 10px 10px;
}
.preview {
    display: flex;
    align-items: center;
    height: 52.5px;
    padding-left: 9.5px;
    background: #3c3c3c;
}

/* session view */
.session {
    display: flex;
    width: 2452.5px;
    flex: none;
}
.tracks {
    display: flex;
    gap: 5px;
    width: 2395px;
    padding: 10px;
    background: #171717;
    border-radius: 10px 10px 0 10px;
}
.track {
    display: flex;
    flex-direction: column;
    gap: 5px;
    width: 232.5px;
    flex: none;
}
.name {
    height: 42.5px;
    padding: 9px 8px;
    color: #1c1c24;
    letter-spacing: 0.2px;
    word-spacing: 2.5px;
}
.c1 { background: #9aadff; }
.c2 { background: #5f89e6; }
.c3 { background: #dc79e6; }
.c4 { background: #bf86cc; }
.c5 { background: #95c8ff; }
.c6 { background: #00c5b6; }
.c7 {
    padding-left: 12px;
    background: #63ffe8;
}
.slots,
.lower {
    display: flex;
    flex-direction: column;
    gap: 2.5px;
}
.slot,
.status {
    display: flex;
    align-items: center;
    height: 42.5px;
    padding-left: 10px;
    background: #3c3c3c;
}
.slot b,
.status b {
    width: 22.5px;
    height: 22.5px;
    background: #1b1b1b;
}
.slot.scene { background: #4f4f4f; }
.blank {
    height: 215px;
    background: #3c3c3c;
}
.status i {
    width: 3px;
    height: 32.5px;
    margin-left: 102px;
    background: #e8e8e8;
}
.io,
.sends,
.mixer,
.cross {
    background: #3c3c3c;
}
.selected .slot,
.selected .blank,
.selected .status,
.selected .io,
.selected .sends,
.selected .mixer,
.selected .cross {
    background: #4f4f4f;
}
.selected .picked { background: #4d7281; }
.master .slot svg {
    width: 19px;
    height: 22px;
    color: #1b1b1b;
}
.master .slot u {
    width: 42.5px;
    height: 42.5px;
    margin-left: auto;
    background: #202020;
    line-height: 43px;
    text-align: center;
    text-decoration: none;
}
.btn-a {
    width: 32.5px;
    height: 32.5px;
    margin-left: 105px;
}
.btn-b {
    width: 50px;
    height: 32.5px;
    margin-left: 5px;
}
.io {
    display: flex;
    flex-direction: column;
    justify-content: flex-end;
    height: 280px;
    padding: 0 5px 5px;
}
.io label {
    height: 32.5px;
    line-height: 32px;
    font-weight: 600;
}
.select,
.empty {
    display: flex;
    align-items: center;
    height: 32.5px;
    flex: none;
    border: 2.5px solid #000;
}
.select {
    padding: 0 3px 0 2.5px;
    background: #1f1f1f;
}
.select svg {
    width: 18px;
    height: 15px;
    margin-left: auto;
}
.select.second,
.empty {
    margin-top: 7.5px;
}
.cue { margin-bottom: 12.5px; }
.dots {
    width: 7.5px;
    height: 23px;
    margin: 0 13px 0 3px;
    background: radial-gradient(circle, #000 3.8px, transparent 4px) 0 0 / 7.5px 7.6px;
}
.mono {
    width: 12.5px;
    height: 23px;
    margin: 0 10px 0 2px;
    border-top: 1.5px solid #3c3c3c;
    background: #000;
}
.stereo {
    width: 13px;
    height: 22px;
    margin: 0 10px 0 2px;
    background: linear-gradient(#3c3c3c 1px, transparent 1px) 0 4px no-repeat, linear-gradient(90deg, #000 5px, #1f1f1f 5px, #1f1f1f 8px, #000 8px);
}
.monitor {
    display: flex;
    height: 32.5px;
    gap: 7.5px;
}
.monitor span,
.sends.post span,
.cue-solo {
    border: 2.5px solid #000;
    background: #505050;
    color: #dcdcdc;
    font-weight: 400;
    line-height: 29px;
    text-align: center;
}
.monitor span:nth-child(1) { width: 42.5px; }
.monitor span:nth-child(2) { width: 67.5px; }
.monitor span:nth-child(3) { width: 50px; }
.monitor .on,
.sends.post span {
    background: #f79a2b;
    color: #000;
}
.sends {
    width: 232.5px;
    height: 132.5px;
    color: #080808;
}
.return .sends { color: #212121; }
.sends text { fill: #e8e8e8; }
.sends .mid { text-anchor: middle; }
.sends .bold { font-weight: 600; }
.sends.post {
    padding-left: 2px;
    color: #e8e8e8;
}
.post h6 {
    margin: 11px 0 -8.5px 117.5px;
    font-size: 25px;
    font-weight: 600;
    line-height: 25px;
}
.post div {
    display: flex;
    align-items: center;
    height: 32.5px;
    margin-bottom: 10px;
}
.post hr {
    height: 2.5px;
    margin: 0;
    border: 0;
    background: #6e6e6e;
}
.post .short { width: 36px; }
.post .long { width: 121px; }
.post span {
    width: 65px;
    height: 32.5px;
    margin-left: 2px;
}
.mixer {
    display: flex;
    height: 300px;
    padding: 10px 0 0 27.5px;
}
.ctl {
    display: flex;
    flex-direction: column;
    align-items: center;
    width: 87.5px;
}
.ctl.midi { padding-top: 137.5px; }
.vol {
    width: 87.5px;
    height: 32.5px;
    border: 2.5px solid #000;
    border-radius: 17px;
    background: #1f1f1f;
    line-height: 28px;
    text-align: center;
}
.pan {
    width: 70px;
    height: 75px;
    margin: 17.5px 0 12.5px;
}
.activator {
    width: 57.5px;
    height: 57.5px;
    border: 2.5px solid #000;
    background: #f79a2b;
    color: #000;
    font-size: 31px;
    font-weight: 600;
    line-height: 53px;
    text-align: center;
}
.solo {
    display: flex;
    align-items: center;
    justify-content: center;
    width: 57.5px;
    height: 32.5px;
    margin-top: 10px;
    border: 2.5px solid #000;
    background: #4f4f4f;
    color: #cfcfcf;
}
.arm {
    width: 18px;
    height: 18px;
    border-radius: 50%;
    background: #dcdcdc;
}
.cue-solo {
    width: 62.5px;
    height: 32.5px;
    margin-top: 25px;
    background: #8e8e8e;
    color: #000;
}
.cue-knob {
    width: 70px;
    height: 75px;
    margin-top: 8.5px;
    color: #b9b9b9;
}
.led-col {
    width: 16px;
    height: 280px;
    margin-left: 52px;
}
.meter {
    width: 90px;
    height: 280px;
    margin-left: 17.5px;
}
.meter text {
    fill: #e8e8e8;
    text-anchor: end;
}
.cross {
    height: 45px;
    padding: 17px 0 0 42.5px;
}
.drop-area {
    flex: 1;
    margin-right: 2.5px;
    padding-top: 47.5px;
    background: #3c3c3c;
    text-align: center;
}
.drop-scene {
    height: 42.5px;
    background: #4f4f4f;
}
.drop-area p {
    margin: 121px 0 0 2px;
}
.side {
    display: flex;
    flex-direction: column;
    align-items: flex-end;
    gap: 10px;
    width: 57.5px;
}
.rail {
    display: flex;
    flex-direction: column;
    align-items: center;
    justify-content: flex-end;
    flex: 1;
    width: 57.5px;
    padding: 0 10px 17.5px 0;
    background: #171717;
    border-radius: 0 10px 10px 0;
}
.pill {
    width: 33px;
    height: 33px;
    margin-top: 14.5px;
    border-radius: 17px;
    background: #f79a2b;
    color: #1b1b1b;
    font-size: 18px;
    font-weight: 700;
    line-height: 33px;
    text-align: center;
}
.pill.io-pill { font-size: 17px; }
.pill.top {
    height: 31px;
    border-radius: 17px 17px 0 0;
}
.pill.bottom {
    height: 31px;
    margin-top: 3.5px;
    border-radius: 0 0 17px 17px;
    line-height: 29px;
}
.pill.off { background: #6a6a6a; }

/* device view */
.detail {
    display: flex;
    flex: none;
    width: 3800px;
    height: 490px;
    margin: 20px 0 0 20px;
    padding: 10px 10px 10px 0;
    background: #1b1b1b;
    border-radius: 10px;
}
.grip {
    display: flex;
    align-items: center;
    width: 37px;
    padding-left: 15px;
}
.detail-body {
    display: flex;
    align-items: center;
    justify-content: center;
    flex: 1;
    padding-bottom: 1px;
    background: #3c3c3c;
    letter-spacing: 0.33px;
}

/* status bar */
.footer {
    position: relative;
    display: flex;
    height: 94px;
    padding: 20px 0 0 20px;
}
.footer .round { margin-top: 2.5px; }
.info,
.overview {
    height: 55px;
    border: 7.5px solid #1b1b1b;
    border-radius: 10px;
    background: #3c3c3c;
}
.info {
    width: 3002.5px;
    margin-left: 20px;
}
.overview {
    width: 515px;
    margin-left: 20px;
}
.tab {
    position: relative;
    width: 107.5px;
    height: 75px;
    margin: -20px 0 0 20px;
    padding: 37px 4px 0 0;
    background: #1b1b1b;
    border-radius: 0 0 10px 10px;
    font-weight: 600;
    text-align: center;
}
/* fillets where the tab meets the panel above */
.tab::before,
.tab::after {
    content: "";
    position: absolute;
    top: 0;
    left: -10px;
    width: 10px;
    height: 10px;
    background: radial-gradient(circle at 0 100%, transparent 10px, #1b1b1b 10px);
}
.tab::after {
    left: auto;
    right: -10px;
    background: radial-gradient(circle at 100% 100%, transparent 10px, #1b1b1b 10px);
}
.footer .last { margin-left: 20px; }
.corner {
    position: absolute;
    right: 0;
    bottom: 0;
    width: 17px;
    height: 22px;
}
```
